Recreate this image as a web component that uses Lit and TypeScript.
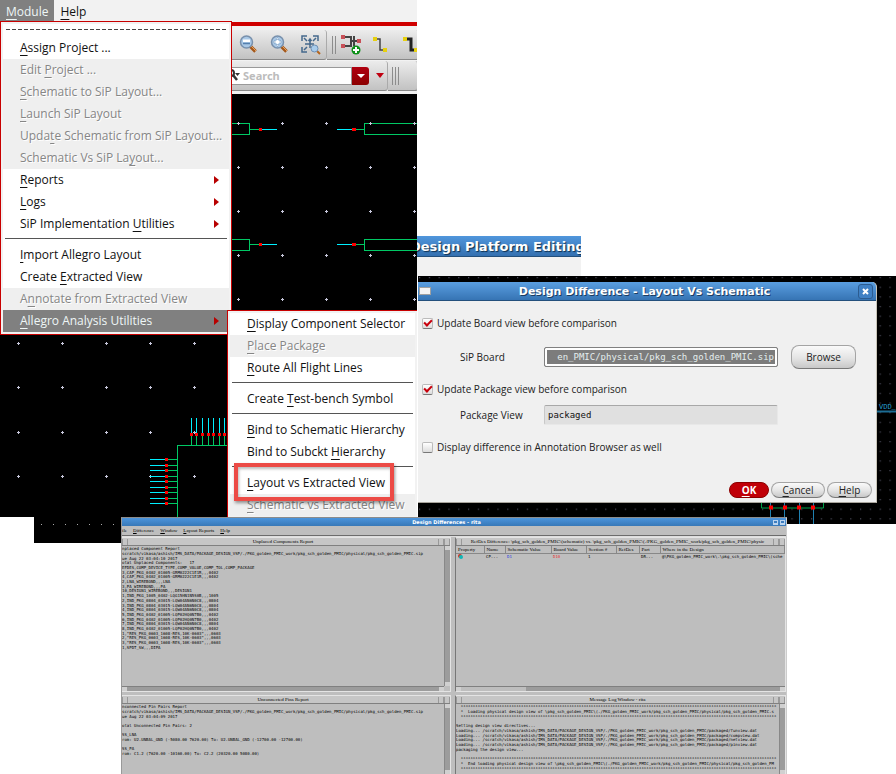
import { LitElement, html, svg, css, nothing } from "lit";
import { customElement, property } from "lit/decorators.js";
import { classMap } from "lit/directives/class-map.js";

type Item = { t: string; k?: string; off?: boolean; sub?: boolean; hot?: boolean; sep?: boolean };

const MODULE: Item[] = [
  { t: "Assign Project ...", k: "A" },
  { t: "Edit Project ...", k: "P", off: true },
  { t: "Schematic to SiP Layout...", k: "S", off: true },
  { t: "Launch SiP Layout", k: "L", off: true },
  { t: "Update Schematic from SiP Layout...", k: "t", off: true },
  { t: "Schematic Vs SiP Layout...", k: "y", off: true },
  { t: "Reports", k: "R", sub: true },
  { t: "Logs", k: "L", sub: true },
  { t: "SiP Implementation Utilities", k: "U", sub: true },
  { t: "", sep: true },
  { t: "Import Allegro Layout", k: "I" },
  { t: "Create Extracted View", k: "E" },
  { t: "Annotate from Extracted View", k: "n", off: true },
  { t: "Allegro Analysis Utilities", k: "A", sub: true, hot: true },
];

const ANALYSIS: Item[] = [
  { t: "Display Component Selector", k: "D" },
  { t: "Place Package", k: "P", off: true },
  { t: "Route All Flight Lines", k: "R" },
  { t: "", sep: true },
  { t: "Create Test-bench Symbol", k: "T" },
  { t: "", sep: true },
  { t: "Bind to Schematic Hierarchy", k: "B" },
  { t: "Bind to Subckt Hierarchy", k: "H" },
  { t: "", sep: true },
  { t: "Layout vs Extracted View", k: "L" },
  { t: "Schematic vs Extracted View", k: "S", off: true },
];

const ROOT = "scratch/vikasa/ashish/IMS_DATA/PACKAGE_DESIGN_VSP/./PKG_golden_PMIC_work/pkg_sch_golden_PMIC/";
const IND8 = "IND_PKG_0804_03015-LQW04AN6N0C8,,,0804";
const IND4 = "IND_PKG_0402_01005-LQP02HQ0N7B0,,,0402";

const UNPLACED = [
  "nplaced Component Report",
  ROOT + "physical/pkg_sch_golden_PMIC.sip",
  "ue Aug 22 03:04:10 2017",
  "otal Unplaced Components:   17",
  "EFDES,COMP_DEVICE_TYPE,COMP_VALUE,COMP_TOL,COMP_PACKAGE",
  "3,CAP_PKG_0402_01005-GRM0222C1E1R,,,0402",
  "4,CAP_PKG_0402_01005-GRM0222C1E1R,,,0402",
  "2,LNA_WIREBOND,,,LNA",
  "3,PA_WIREBOND,,,PA",
  "10,DESIGN1_WIREBOND,,,DESIGN1",
  "1,IND_PKG_1005_0402-LQG15HN1N5S0B,,,1005",
  "2," + IND8, "3," + IND8, "4," + IND8,
  "5," + IND4, "6," + IND4, "7," + IND8, "8," + IND4,
  '1,"RES_PKG_0603_1608-RES,10K-0603",,,0603',
  '2,"RES_PKG_0603_1608-RES,10K-0603",,,0603',
  '3,"RES_PKG_0603_1608-RES,10K-0603",,,0603',
  "1,SPDT_SW,,,DIPA",
];

const UNCONNECTED = [
  "nconnected Pin Pairs Report",
  ROOT + "physical/pkg_sch_golden_PMIC.sip",
  "ue Aug 22 03:04:09 2017",
  "",
  "otal Unconnected Pin Pairs: 2",
  "",
  "SS_LNA",
  "rom: U2.UNBAL_GND (-5080.00 7620.00) To: U2.UNBAL_GND (-12700.00 -12700.00)",
  "",
  "SS_PA",
  "rom: C1.2 (7620.00 -10160.00) To: C2.2 (20320.00 5080.00)",
];

const STARS = "  " + "*".repeat(131);
const LOG = [
  STARS,
  "  *  Loading physical design view of \\pkg_sch_golden_PMIC\\(./PKG_golden_PMIC_work/pkg_sch_golden_PMIC/physical/pkg_sch_golden_PMIC.s",
  STARS,
  "",
  "Setting design view directives...",
  "Loading... /" + ROOT + "packaged/funview.dat",
  "Loading... /" + ROOT + "packaged/compview.dat",
  "Loading... /" + ROOT + "packaged/netview.dat",
  "Loading... /" + ROOT + "packaged/pinview.dat",
  "packaging the design view...",
  "",
  STARS,
  "  *  End loading physical design view of \\pkg_sch_golden_PMIC\\(./PKG_golden_PMIC_work/pkg_sch_golden_PMIC/physical/pkg_sch_golden_PM",
  STARS,
];

const mnemonic = (t: string, k?: string) => {
  const i = k ? t.indexOf(k) : -1;
  return i < 0 ? t : html`${t.slice(0, i)}<u>${t[i]}</u>${t.slice(i + 1)}`;
};

const range = (n: number) => Array.from({ length: n }, (_, i) => i);

@customElement("drop-menu")
class DropMenu extends LitElement {
  @property({ attribute: false }) items: Item[] = [];
  @property({ type: Boolean }) tearoff = false;
  static styles = css`
    :host { display: block; box-sizing: border-box; border: 1px solid #c80000; background: #f2f2f2; padding: 2px; font: 12px/22px "Open Sans", "Noto Sans", sans-serif; }
    .tear { height: 13px; box-sizing: border-box; background: #fff; padding: 5px 3px 0; }
    .tear hr { margin: 0; border: 0; height: 1px; background: repeating-linear-gradient(90deg, #444 0 4px, transparent 4px 6px); }
    .item { display: flex; align-items: center; justify-content: space-between; width: 100%; height: 22px; box-sizing: border-box; border: 0; padding: 0 10px 0 17px; background: #fff; color: #111; font: inherit; text-align: left; white-space: nowrap; }
    .off { background: #efefef; color: #868686; text-shadow: 1px 1px #fff; }
    .hot { background: #808080; color: #eef6f6; }
    .sep { height: 9px; background: #fff; padding: 3px 2px 0; box-sizing: border-box; }
    .sep hr { margin: 0; border: 0; height: 1px; background: #555; }
    u { text-underline-offset: 3px; text-decoration-thickness: 1px; text-decoration-skip-ink: none; }
    svg { display: block; }
  `;
  render() {
    return html`
      ${this.tearoff ? html`<div class="tear"><hr /></div>` : nothing}
      ${this.items.map((m) => m.sep
        ? html`<div class="sep"><hr /></div>`
        : html`<button class=${classMap({ item: true, off: !!m.off, hot: !!m.hot })} role="menuitem">
            <span>${mnemonic(m.t, m.k)}</span>
            ${m.sub ? html`<svg width="5" height="8"><path d="M0 0L5 4L0 8Z" fill="#b80000" /></svg>` : nothing}
          </button>`)}
    `;
  }
}

@customElement("left-board")
class LeftBoard extends LitElement {
  static styles = css`:host { display: block; background: #000; } svg { display: block; }`;
  render() {
    const row = (y: number) => svg`
      <path d="M230 ${y - 5.5}H249.5V${y + 5.5}H230M250 ${y}H260M356 ${y}H364.5M417 ${y - 5.5}H364.5V${y + 5.5}H417" stroke="#00c864" fill="none" />
      <path d="M261 ${y}H277M337 ${y}H353" stroke="#00f0ff" />
      <path d="M259 ${y}H262M352 ${y}H356" stroke="red" stroke-width="3" />`;
    const tops = [191.5, 196.5, 202.5, 208.5, 213.5, 219.5, 224.5];
    const sides = [459.5, 465.5, 470.5, 476.5, 481.5, 487.5, 492.5, 498.5, 503.5];
    return html`<svg width="417" height="423" viewBox="0 94 417 423" shape-rendering="crispEdges">
      ${row(129)}${row(244.5)}
      ${range(9).map((j) => range(10).map((i) => {
        const x = 18.5 + i * 44, y = 123.5 + j * 44 + (j > 6 ? 1 : 0);
        return svg`<path d="M${x - 1.5} ${y}h3M${x} ${y - 1.5}v3" stroke="#c8c8dc" />`;
      }))}
      <path d="M230 445.5H177.5V520" stroke="#00c864" fill="none" />
      ${tops.map((x) => svg`<path d="M${x} 418V433" stroke="#00f0ff" /><path d="M${x} 436V445" stroke="#00c864" /><path d="M${x - 1.5} 434.5h3" stroke="red" stroke-width="3" />`)}
      ${sides.map((y) => svg`<path d="M150 ${y}H165" stroke="#00f0ff" /><path d="M168 ${y}H177" stroke="#00c864" /><path d="M165 ${y}h3" stroke="red" stroke-width="3" />`)}
    </svg>`;
  }
}

@customElement("tool-strip")
class ToolStrip extends LitElement {
  static styles = css`
    :host { display: block; background: #f2f2f2; border-top: 4px solid #d00000; padding-top: 4px; box-sizing: border-box; overflow: hidden; }
    .row { display: flex; }
    .row + .row { padding-top: 1px; }
    .bar { box-sizing: border-box; height: 30px; display: flex; align-items: center; background: linear-gradient(#ececec, #c2c2c2); border-bottom: 1px solid #888; border-right: 1px solid #aaa; border-radius: 0 3px 3px 0; flex: none; }
    .one { width: 96px; padding-left: 8px; gap: 11px; }
    .two { width: 92px; padding-left: 5px; gap: 4px; }
    .three { width: 157px; }
    .four { width: 30px; padding-left: 4px; }
    button { border: 0; padding: 0; background: none; display: block; }
    svg { display: block; }
    .search { display: flex; align-items: center; width: 121px; height: 18px; background: #fff; border: 1px solid #999; border-left: 0; box-sizing: border-box; }
    input { border: 0; outline: 0; padding: 0; width: 100px; background: none; font: bold 11px "Noto Sans", sans-serif; color: #555; }
    input::placeholder { color: #bcbcbc; opacity: 1; }
    .drop { width: 17px; height: 18px; background: linear-gradient(#b00010, #8c0000); border-radius: 0 3px 3px 0; display: grid; place-items: center; flex: none; }
    .more { margin-left: 7px; }
  `;
  render() {
    const grip = html`<svg width="7" height="18"><path d="M.5 0V18M3.5 0V18M6.5 0V18" stroke="#8c8c8c" /></svg>`;
    const lens = (inner: unknown) => html`<button aria-label="Zoom"><svg width="20" height="20" viewBox="0 0 20 20">
      <path d="M11 11L16.500 16.500" stroke="#a4581c" stroke-width="3.500" /><path d="M11.500 10.500L17 16" stroke="#eaa45c" />
      <circle cx="7.500" cy="7" r="6" fill="#a9c8e6" stroke="#7890ac" stroke-width="1.500" />${inner}</svg></button>`;
    return html`
      <div class="row">
        <div class="bar one">
          ${lens(svg`<path d="M4 4.500H11V7H4Z" fill="#fff" /><path d="M4 8.500H11" stroke="#5580ae" stroke-width="1.500" />`)}
          ${lens(svg`<path d="M7.500 3V11M3.500 7H11.500" stroke="#fff" stroke-width="2" /><path d="M6 4.500L7.500 2.500L9 4.500ZM6 9.500L7.500 11.500L9 9.500ZM5 5.500L3 7L5 8.500ZM10 5.500L12 7L10 8.500Z" fill="#fff" stroke="#5580ae" stroke-width=".5" />`)}
          <button aria-label="Zoom to fit"><svg width="20" height="20" viewBox="0 0 20 20">
            <path d="M1 6V1H6M12 1H17V6M1 12V17H6M3 3L6 6M15 3L12 6M3 15L6 12M9 4V13M4 9H13M7.500 6L9 4L10.500 6" stroke="#44688c" stroke-width="1.500" fill="none" />
            <path d="M16 16L19 19" stroke="#b5651d" stroke-width="2" /><circle cx="13.500" cy="13.500" r="3.500" fill="#a8ccec" stroke="#6f90b4" /></svg></button>
        </div>
        <div class="bar two">
          ${grip}
          <button aria-label="Add component"><svg width="21" height="21" viewBox="0 0 21 21">
            <path d="M3 3H10V12H3M10 7H13M13 2V12M13 7H19" stroke="#444" stroke-width="2" fill="none" />
            <path d="M0 1h4v4H0zM0 10h4v4H0zM16 5h4v4h-4z" fill="#c85058" />
            <circle cx="15" cy="16" r="4.500" fill="#0c9018" /><path d="M15 13V19M12 16H18" stroke="#fff" stroke-width="2" /></svg></button>
          <button class="more" aria-label="Add wire"><svg width="14" height="18" viewBox="0 0 14 18">
            <path d="M3 3H7V14H11" stroke="#444" fill="none" stroke-width="1.500" /><path d="M0 1h4v4H0zM10 12h4v4h-4z" fill="#e6d010" /></svg></button>
          <button class="more" aria-label="Add bus"><svg width="20" height="18" viewBox="0 0 20 18">
            <path d="M8 3H13V14H17" stroke="#222" fill="none" stroke-width="3" /><path d="M5 1h4v4H5zM16 12h4v4h-4z" fill="#e6d010" /></svg></button>
        </div>
      </div>
      <div class="row">
        <div class="bar three">
          <div class="search">
            <svg width="12" height="16" viewBox="0 0 12 16"><circle cx="0" cy="5" r="3" fill="none" stroke="#333" stroke-width="2" /><path d="M2 7L6 12" stroke="#333" stroke-width="2.500" /><path d="M4 5H9L6.500 8Z" fill="#333" /></svg>
            <input type="search" aria-label="Search" placeholder="Search" />
          </div>
          <button class="drop" aria-label="Search options"><svg width="8" height="4"><path d="M0 0H8L4 4Z" fill="#fff" /></svg></button>
          <button class="more" aria-label="More"><svg width="8" height="5"><path d="M0 0H8L4 5Z" fill="#c00010" /></svg></button>
        </div>
        <div class="bar four">${grip}</div>
      </div>`;
  }
}

@customElement("compare-dialog")
class CompareDialog extends LitElement {
  static styles = css`
    :host { display: block; background: #f0f0f0; border-bottom: 1px solid #a8a49c; border-right: 1px solid #c8c4b8; border-radius: 0 5px 0 0; box-sizing: border-box; overflow: hidden; font: 10px/14px "Open Sans", "Noto Sans", sans-serif; color: #222; }
    header { display: flex; align-items: center; height: 19px; box-sizing: border-box; padding: 0 3px 0 1px; background: linear-gradient(#5a9ee0, #3674b4); border-bottom: 1px solid #24507c; }
    h2 { margin: 0; flex: 1; text-align: center; color: #fff; font: bold 11px "DejaVu Sans", sans-serif; text-shadow: 1px 1px #1c3c60; }
    .win { width: 12px; height: 8px; background: #f4f4f4; border: 1px solid #a0a0a0; box-sizing: border-box; }
    .close { width: 15px; height: 15px; padding: 0; border: 1px solid #2c5c90; border-radius: 3px; background: #3f80c4; display: grid; place-items: center; }
    form { display: grid; grid-template-columns: 38px 84px 234px auto; padding: 15px 0 0 4px; margin: 0; }
    .check { grid-column: 1 / -1; display: flex; align-items: center; gap: 4px; height: 14px; }
    .check input { appearance: none; margin: 0; width: 11px; height: 11px; background: linear-gradient(#fff, #dcdcdc); border: 1px solid #bbb; border-bottom-color: #777; border-radius: 2px; display: grid; place-items: center; }
    .check input:checked::before { content: ""; width: 6px; height: 3px; border: solid #c8000c; border-width: 0 0 2px 2px; transform: rotate(-45deg) translate(1px, -1px); }
    .lab { grid-column: 2; align-self: center; }
    .field { box-sizing: border-box; width: 100%; height: 20px; margin: 0; border: 1px solid #808080; border-radius: 2px; padding: 2px 3px; background: #fff; font: 9px "DejaVu Sans Mono", monospace; outline: 0; }
    .path { text-align: right; color: #e4eeee; background: #7c7c7c; box-shadow: inset 0 0 0 2px #fff; }
    .ro { background: #e0e0e0; border-color: #a8a8a8 #e8e8e8 #e8e8e8 #c8c8c8; color: #111; }
    .a { padding-top: 15px; padding-bottom: 13px; }
    .b { padding-top: 9px; padding-bottom: 15px; }
    .row { grid-column: 1 / -1; display: grid; grid-template-columns: subgrid; align-items: center; }
    .btn { box-sizing: border-box; border: 1px solid #a4a4a4; border-bottom-color: #787878; background: linear-gradient(#fafafa, #e4e4e4 55%, #c8c8c8); color: #222; font: inherit; padding: 0; height: 16px; border-radius: 8px; line-height: 13px; }
    .browse { width: 65px; height: 24px; margin-left: 13px; }
    footer { display: flex; justify-content: flex-end; gap: 2px; padding: 28px 4px 4px 0; }
    .ok { width: 40px; background: #c00008; border-color: #8c0000; color: #fff; font-weight: bold; }
    .cancel { width: 54px; }
    .help { width: 45px; }
    u { text-underline-offset: 2px; text-decoration-skip-ink: none; }
  `;
  render() {
    return html`
      <header><span class="win"></span><h2>Design Difference - Layout Vs Schematic</h2>
        <button class="close" aria-label="Close"><svg width="9" height="9"><path d="M2 2L7 7M7 2L2 7" stroke="#fff" stroke-width="2" /></svg></button></header>
      <form>
        <label class="check"><input type="checkbox" checked />Update Board view before comparison</label>
        <div class="row a"><label class="lab" for="sip">SiP Board</label>
          <input class="field path" id="sip" value="en_PMIC/physical/pkg_sch_golden_PMIC.sip" />
          <button type="button" class="btn browse">Browse</button></div>
        <label class="check"><input type="checkbox" checked />Update Package view before comparison</label>
        <div class="row b"><label class="lab" for="view">Package View</label>
          <input class="field ro" id="view" value="packaged" readonly /></div>
        <label class="check"><input type="checkbox" />Display difference in Annotation Browser as well</label>
      </form>
      <footer>
        <button class="btn ok"><u>O</u>K</button><button class="btn cancel"><u>C</u>ancel</button><button class="btn help"><u>H</u>elp</button>
      </footer>`;
  }
}

@customElement("diff-window")
class DiffWindow extends LitElement {
  static styles = css`
    :host { display: block; background: #bebebe; box-sizing: border-box; border-top: 1px solid #8c8c8c; border-left: 1px solid #999; border-right: 1px solid #ccc; overflow: hidden; font: 5px/7px "Liberation Serif", serif; color: #000; }
    header { height: 8px; display: flex; align-items: center; gap: 2px; padding-right: 1px; background: linear-gradient(#4c94dc, #3878b8); color: #fff; }
    h2 { margin: 0; flex: 1; text-align: center; font: bold 5px/8px "DejaVu Sans", sans-serif; }
    .wb { width: 5px; height: 5px; padding: 0; border: 1px solid #bcd4ee; border-width: 1px 1px 2px; background: #3f7fc0; box-sizing: border-box; }
    nav { height: 10px; box-sizing: border-box; display: flex; align-items: center; gap: 6px; border-bottom: 1px solid #6c6c6c; box-shadow: 0 1px #dedede; }
    nav button { border: 0; padding: 0; background: none; font: inherit; color: inherit; }
    main { display: grid; grid-template-columns: 329fr 331fr; grid-template-rows: 155px 80px; gap: 3px 4px; padding-top: 1px; }
    section { display: flex; flex-direction: column; min-width: 0; min-height: 0; overflow: hidden; border: 1px solid #e4e4e4; border-left-color: #777; }
    .first { border-left: 0; }
    h3 { margin: 0; font: inherit; height: 7px; flex: none; display: flex; align-items: center; justify-content: space-between; border-bottom: 1px solid #808080; background: #c6c6c6; white-space: nowrap; }
    .mini { width: 6px; height: 6px; border: solid #999; border-width: 0 1px; box-sizing: border-box; flex: none; }
    .pair { display: flex; }
    .body { flex: 1; display: grid; grid-template-columns: minmax(0, 1fr) auto; grid-template-rows: minmax(0, 1fr) auto; min-height: 0; }
    .text { display: grid; grid-auto-rows: 1fr; overflow: hidden; white-space: pre; font: 4px/4px "DejaVu Sans Mono", monospace; color: #000; padding: 1px 0 0; align-items: center; }
    .l22 { height: 103px; }
    .l11 { height: 51px; }
    .l14 { height: 66px; }
    .vs, .hs { background: #9c9c9c; display: flex; justify-content: space-between; }
    .vs { width: 6px; flex-direction: column; border-left: 1px solid #888; box-sizing: border-box; }
    .hs { height: 5px; border-top: 1px solid #808080; box-sizing: border-box; }
    .cap { width: 5px; height: 4px; background: #d0d0d0; flex: none; }
    .thumb { width: 65px; background: #bebebe; margin-right: auto; }
    table { border-collapse: collapse; table-layout: fixed; width: 100%; align-self: start; }
    th { box-sizing: border-box; font: inherit; height: 7px; padding: 0 0 0 2px; text-align: left; border-right: 1px solid #888; border-bottom: 1px solid #888; white-space: nowrap; }
    td { font: 4px/5px "DejaVu Sans Mono", monospace; padding: 0 0 0 2px; white-space: nowrap; }
    .c1 { width: 28px; } .c2 { width: 21px; } .c3 { width: 46px; } .c4 { width: 35px; } .c5 { width: 30px; } .c6 { width: 23px; } .c7 { width: 21px; }
    .blue { color: #2840e0; }
    .red { color: #e83030; }
    td svg { display: block; }
    u { text-decoration-thickness: 1px; }
  `;
  private pane(title: string, body: unknown, opts: { first?: boolean; v?: boolean; h?: boolean; thumb?: boolean }) {
    return html`<section class=${classMap({ first: !!opts.first })}>
      <h3><span class="mini"></span><span>${title}</span><span class="pair"><span class="mini"></span><span class="mini"></span></span></h3>
      <div class="body">${body}
        ${opts.v ? html`<div class="vs"><span class="cap"></span><span class="cap"></span></div>` : html`<span></span>`}
        ${opts.h ? html`<div class="hs"><span class="cap"></span>${opts.thumb ? html`<span class="thumb"></span>` : nothing}<span class="cap"></span></div>` : nothing}
      </div></section>`;
  }
  private lines(a: string[], c: string) {
    return html`<div><div class="text ${c}">${a.map((l) => html`<span>${l}</span>`)}</div></div>`;
  }
  render() {
    return html`
      <header><h2>Design Differences - rita</h2>
        <button class="wb" aria-label="Minimize"></button><button class="wb" aria-label="Maximize"></button></header>
      <nav><button>ile</button><button><u>D</u>ifference</button><button><u>W</u>indow</button><button><u>L</u>ayout Reports</button><button><u>H</u>elp</button></nav>
      <main>
        ${this.pane("Unplaced Components Report", this.lines(UNPLACED, "l22"), { first: true, v: true, h: true })}
        ${this.pane("RefDes Difference: \\pkg_sch_golden_PMIC\\(schematic) vs. \\pkg_sch_golden_PMIC\\(./PKG_golden_PMIC_work/pkg_sch_golden_PMIC/physic", html`
          <table>
            <thead><tr><th class="c1">Property</th><th class="c2">Name</th><th class="c3">Schematic Value</th><th class="c4">Board Value</th><th class="c5">Section #</th><th class="c6">RefDes</th><th class="c7">Part</th><th>Where in the Design</th></tr></thead>
            <tbody><tr><td><svg width="5" height="5"><circle cx="2" cy="2" r="2" fill="#d03020" /><circle cx="3" cy="3" r="2" fill="#10b8b8" /></svg></td>
              <td>CP...</td><td class="blue">D1</td><td class="red">D10</td><td>1</td><td></td><td>DR...</td><td>@\\PKG_golden_PMIC_work\\.\\pkg_sch_golden_PMIC\\(sche</td></tr></tbody>
          </table>`, { h: true, thumb: true })}
        ${this.pane("Unconnected Pins Report", this.lines(UNCONNECTED, "l11"), { first: true, v: true })}
        ${this.pane("Message Log Window - rita", this.lines(LOG, "l14"), { v: true })}
      </main>`;
  }
}

@customElement("app-root")
class AppRoot extends LitElement {
  static styles = css`
    :host { display: block; position: relative; min-height: 100vh; background: #fff; overflow: hidden; font-family: "Open Sans", "Noto Sans", sans-serif; }
    .layer { position: absolute; }
    .menubar { left: 0; top: 0; width: 417px; height: 22px; background: #f2f2f2; display: flex; font-size: 12px; }
    .menubar button { border: 0; padding: 0 6px; height: 22px; background: none; font: inherit; color: #111; }
    .menubar .open { background: #808080; color: #eef6f6; }
    u { text-underline-offset: 3px; text-decoration-skip-ink: none; }
    .tools { left: 231px; top: 22px; width: 186px; height: 72px; }
    .lboard { left: 0; top: 94px; width: 417px; height: 423px; }
    .menu { left: 0; top: 21px; width: 232px; }
    .sub { left: 227px; top: 310px; width: 190px; height: 207px; border-width: 1px 0 0 1px; overflow: hidden; }
    .mark { left: 234px; top: 463px; width: 160px; height: 38px; box-sizing: border-box; border: 4px solid #ec4b46; box-shadow: 1px 2px 3px #0006, inset 1px 2px 3px #0004; }
    .strip { left: 34px; top: 517px; width: 87px; height: 26px; background: #000; }
    .editor { left: 417px; top: 236px; width: 164px; height: 40px; background: #f2f2f2; overflow: hidden; }
    .editor h2 { margin: 0 -7px; height: 21px; box-sizing: border-box; border-bottom: 1px solid #24507c; background: linear-gradient(#5096dc, #3470b0); color: #fff; display: flex; align-items: center; font: bold 13px "DejaVu Sans", sans-serif; white-space: nowrap; text-shadow: 1px 1px 1px #10304c; }
    .rboard { left: 418px; top: 276px; right: 0; height: 248px; background: #000; }
    .rboard svg { display: block; width: 100%; height: 100%; }
    .dialog { left: 418px; top: 282px; width: 459px; height: 221px; }
    .diff { left: 121px; top: 517px; width: 666px; height: 257px; }
  `;
  render() {
    return html`
      <left-board class="layer lboard"></left-board>
      <tool-strip class="layer tools"></tool-strip>
      <div class="layer menubar"><button class="open"><u>M</u>odule</button><button><u>H</u>elp</button></div>
      <drop-menu class="layer menu" tearoff .items=${MODULE}></drop-menu>
      <div class="layer editor"><h2>Design Platform Editing</h2></div>
      <drop-menu class="layer sub" .items=${ANALYSIS}></drop-menu>
      <div class="layer mark"></div>
      <div class="layer rboard"><svg aria-hidden="true">
        <defs><pattern id="g" x="1" y="1" width="9.800" height="9.650" patternUnits="userSpaceOnUse"><path d="M0 0h1.200v1.200h-1.200z" fill="#4c4c5c" /></pattern></defs>
        <rect width="100%" height="100%" fill="url(#g)" />
        <path d="M343.500 226V232H405.500V226" stroke="#00a048" fill="none" />
        <path d="M352.500 226V248M366.500 226V248M381.500 226V248M395.500 226V248" stroke="#2080b0" />
        <path d="M351 231.500h4M365 231.500h4M379 231.500h4M393 231.500h4" stroke="red" stroke-width="4" />
        <path d="M459 135.500H600" stroke="#1c6c94" stroke-width="2" />
        <text x="461" y="133" fill="#28a0d4" font-size="7" font-family="Liberation Mono">VDD_</text>
      </svg></div>
      <div class="layer strip"><svg width="87" height="26" aria-hidden="true">${range(7).map((i) => svg`<path d="M${7 + i * 12} 7.500h1" stroke="#aaa" />`)}</svg></div>
      <compare-dialog class="layer dialog"></compare-dialog>
      <diff-window class="layer diff"></diff-window>`;
  }
}
